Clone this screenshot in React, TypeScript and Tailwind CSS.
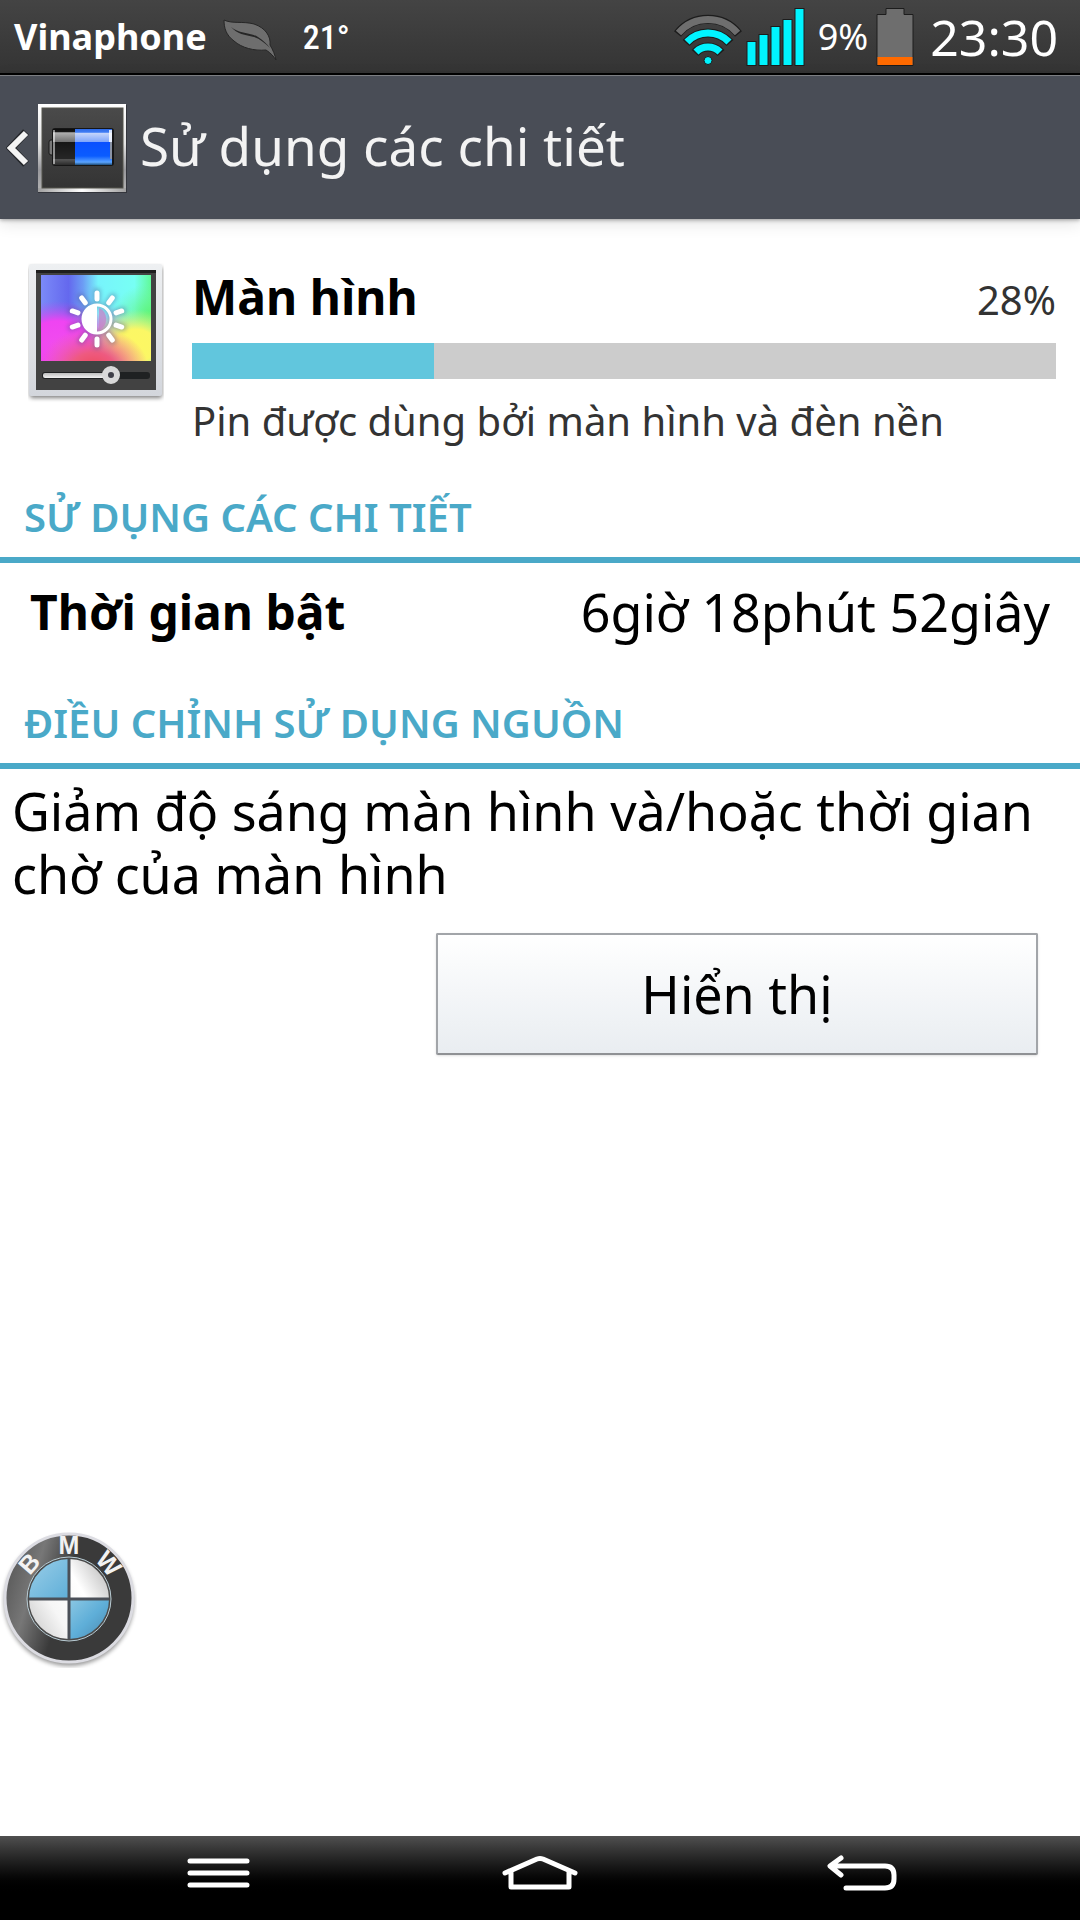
import { useState } from "react";

function LeafIcon() {
  return (
    <svg className="w-14 h-11" viewBox="0 0 56 44" aria-hidden="true">
      <path
        d="M1 1 C9 5 20 2 31 5 C43 9 48 18 47 26 C50 31 52 36 53 41 C51 38 48 34 43 31 C31 32 19 29 11 22 C3 16 1 9 1 1 Z"
        fill="#6e6e6e"
        stroke="#262626"
        strokeWidth="1"
      />
      <path
        d="M8 8 C16 15 27 13 35 18 C40 21 44 25 47 29 C42 24 37 20 31 18 C22 16 14 15 8 8 Z"
        fill="#262626"
      />
    </svg>
  );
}

function WifiIcon() {
  return (
    <svg className="w-17 h-15" viewBox="0 -7 68 60" fill="none" aria-hidden="true">
      <g stroke="#1c1c1c" strokeWidth="9">
        <path d="M3.5 20 A39 39 0 0 1 64.5 20" />
        <path d="M12 29 A29 29 0 0 1 56 29" />
        <path d="M21 39 A17 17 0 0 1 47 39" />
      </g>
      <path d="M4.5 19 A39 39 0 0 1 63.5 19" stroke="#6e6e6e" strokeWidth="7" />
      <path d="M13 28 A29 29 0 0 1 55 28" stroke="#00f4ff" strokeWidth="7" />
      <path d="M22 38 A17 17 0 0 1 46 38" stroke="#00f4ff" strokeWidth="7" />
      <circle cx="34" cy="46.5" r="4" fill="#00f4ff" stroke="#1c1c1c" strokeWidth="1" />
    </svg>
  );
}

function SignalIcon() {
  return (
    <svg className="w-15 h-15" viewBox="0 0 60 60" fill="#00f4ff" stroke="#1c1c1c" aria-hidden="true">
      <rect x="1" y="34.5" width="9" height="24" />
      <rect x="13" y="27.5" width="9" height="31" />
      <rect x="25" y="19.5" width="9" height="39" />
      <rect x="37" y="12.5" width="9" height="46" />
      <rect x="49" y="1.5" width="9" height="57" />
    </svg>
  );
}

function BatteryIcon() {
  return (
    <svg className="w-[38px] h-15" viewBox="0 0 38 60" aria-hidden="true">
      <path d="M1 7.5 H10 V1.5 H28 V7.5 H37 V58.5 H1 Z" fill="#6e6e6e" stroke="#1c1c1c" />
      <rect x="1.5" y="50" width="35" height="8" fill="#ff6a00" />
    </svg>
  );
}

function BatteryAppIcon() {
  return (
    <svg className="size-[90px]" viewBox="0 -1 90 90" aria-hidden="true">
      <defs>
        <linearGradient id="frame" x1="0" y1="0" x2="0" y2="1">
          <stop offset="0" stopColor="#ffffff" />
          <stop offset="0.45" stopColor="#e4e4e4" />
          <stop offset="0.75" stopColor="#98989c" />
          <stop offset="1" stopColor="#b4b4b4" />
        </linearGradient>
        <linearGradient id="frameEdge" x1="0" y1="0" x2="1" y2="0">
          <stop offset="0" stopColor="#a0a0a0" />
          <stop offset="0.5" stopColor="#ffffff" />
          <stop offset="1" stopColor="#a0a0a0" />
        </linearGradient>
        <linearGradient id="plate" x1="0" y1="0" x2="0" y2="1">
          <stop offset="0" stopColor="#4a4a4a" />
          <stop offset="1" stopColor="#343434" />
        </linearGradient>
        <linearGradient id="cellEmpty" x1="0" y1="0" x2="0" y2="1">
          <stop offset="0" stopColor="#0c0c0c" />
          <stop offset="0.09" stopColor="#1a1a1a" />
          <stop offset="0.1" stopColor="#b0b0b0" />
          <stop offset="0.36" stopColor="#707070" />
          <stop offset="0.37" stopColor="#161616" />
          <stop offset="0.82" stopColor="#262626" />
          <stop offset="0.85" stopColor="#555555" />
          <stop offset="1" stopColor="#2a2a2a" />
        </linearGradient>
        <linearGradient id="cellFull" x1="0" y1="0" x2="0" y2="1">
          <stop offset="0" stopColor="#2f6be6" />
          <stop offset="0.09" stopColor="#3f7cf5" />
          <stop offset="0.12" stopColor="#c3d4fb" />
          <stop offset="0.36" stopColor="#7ea5fb" />
          <stop offset="0.37" stopColor="#0a50ff" />
          <stop offset="0.75" stopColor="#0a5cff" />
          <stop offset="0.92" stopColor="#5ba4ff" />
          <stop offset="1" stopColor="#1d4c78" />
        </linearGradient>
      </defs>
      <rect x="0" y="1" width="89" height="88" fill="#000000" opacity="0.3" />
      <rect x="0" y="0" width="88" height="88" fill="url(#frame)" />
      <rect x="0" y="84" width="88" height="4" fill="url(#frameEdge)" />
      <rect x="4" y="4" width="81" height="80" fill="url(#plate)" stroke="#55554d" />
      <rect x="11" y="36" width="5" height="15" rx="2" fill="#777777" stroke="#1a1a1a" />
      <rect x="14" y="24" width="62" height="38" rx="3" fill="#161616" />
      <rect x="15" y="25" width="23" height="36" fill="url(#cellEmpty)" />
      <rect x="37" y="25" width="37" height="36" fill="url(#cellFull)" />
      <rect x="15" y="26" width="2" height="34" fill="#ffffff" opacity="0.5" />
      <rect x="71" y="26" width="3" height="12" fill="#ffffff" opacity="0.8" />
      <rect x="72" y="38" width="2" height="17" fill="#8a93a5" />
    </svg>
  );
}

function DisplayIcon() {
  const rays = [0, 36, 72, 108, 144, 180, 216, 252, 288, 324];
  return (
    <svg className="w-34 h-35 shrink-0" viewBox="0 0 136 140" aria-hidden="true">
      <defs>
        <linearGradient id="bezel" x1="0" y1="0" x2="0" y2="1">
          <stop offset="0" stopColor="#eef0f2" />
          <stop offset="1" stopColor="#d3d6dc" />
        </linearGradient>
        <linearGradient id="slider" x1="0" y1="0" x2="0" y2="1">
          <stop offset="0" stopColor="#bdbdbd" />
          <stop offset="1" stopColor="#f2f2f2" />
        </linearGradient>
        <linearGradient id="blue" x1="0" y1="0" x2="1" y2="0">
          <stop offset="0" stopColor="#7b8af8" />
          <stop offset="0.25" stopColor="#6468ee" />
          <stop offset="0.38" stopColor="#6c9cf4" />
          <stop offset="0.52" stopColor="#77f4fc" />
          <stop offset="0.85" stopColor="#77fff4" />
          <stop offset="1" stopColor="#60fa98" />
        </linearGradient>
        <radialGradient id="magenta" cx="0.15" cy="0.82" r="0.52">
          <stop offset="0" stopColor="#f14cee" />
          <stop offset="0.55" stopColor="#ef44f2" />
          <stop offset="1" stopColor="#b050f0" stopOpacity="0" />
        </radialGradient>
        <radialGradient id="yellow" cx="0.86" cy="0.82" r="0.42">
          <stop offset="0" stopColor="#fdf763" />
          <stop offset="0.45" stopColor="#fbf765" />
          <stop offset="1" stopColor="#d8f070" stopOpacity="0" />
        </radialGradient>
        <radialGradient id="green" cx="1" cy="0.45" r="0.35">
          <stop offset="0" stopColor="#5df57a" />
          <stop offset="1" stopColor="#70f5a0" stopOpacity="0" />
        </radialGradient>
        <radialGradient id="red" cx="0.48" cy="1.1" r="0.5">
          <stop offset="0" stopColor="#ee4858" />
          <stop offset="0.4" stopColor="#ee5a80" />
          <stop offset="1" stopColor="#ee60b0" stopOpacity="0" />
        </radialGradient>
        <radialGradient id="lilac" cx="0.55" cy="0.7" r="0.35">
          <stop offset="0" stopColor="#dfa0cc" />
          <stop offset="1" stopColor="#d0a0e0" stopOpacity="0" />
        </radialGradient>
        <filter id="soft" x="-20%" y="-20%" width="140%" height="140%">
          <feGaussianBlur stdDeviation="2" />
        </filter>
      </defs>
      <rect x="2" y="4" width="132" height="131" rx="2" fill="#000000" opacity="0.5" filter="url(#soft)" />
      <rect x="1" y="1" width="133" height="132" rx="2" fill="url(#bezel)" />
      <rect x="8" y="7" width="120" height="120" fill="#424242" />
      <rect x="8" y="7" width="120" height="3" fill="#1e1e1e" />
      <rect x="13" y="12" width="110" height="86" fill="url(#blue)" />
      <rect x="13" y="12" width="110" height="86" fill="url(#lilac)" />
      <rect x="13" y="12" width="110" height="86" fill="url(#magenta)" />
      <rect x="13" y="12" width="110" height="86" fill="url(#green)" />
      <rect x="13" y="12" width="110" height="86" fill="url(#yellow)" />
      <rect x="13" y="12" width="110" height="86" fill="url(#red)" />
      <g stroke="#50508a" strokeWidth="8" strokeLinecap="round" opacity="0.35" filter="url(#soft)">
        {rays.map((angle) => (
          <path key={angle} d="M69 29 V36" transform={`rotate(${angle} 69 56)`} />
        ))}
        <circle cx="69" cy="56" r="14" fill="none" strokeWidth="5" />
      </g>
      <g stroke="#ffffff" strokeWidth="5" strokeLinecap="round">
        {rays.map((angle) => (
          <path key={angle} d="M69 30 V36" transform={`rotate(${angle} 69 56)`} />
        ))}
      </g>
      <circle cx="69" cy="56" r="14" fill="none" stroke="#ffffff" strokeWidth="3" />
      <path d="M69 42 A14 14 0 0 0 69 70 Z" fill="#ffffff" />
      <path d="M71 45 A12 12 0 0 1 71 67 Z" fill="#c77fc8" opacity="0.7" />
      <rect x="14" y="109" width="108" height="7" rx="3" fill="#1f2122" />
      <rect x="15" y="110" width="62" height="5" rx="2" fill="url(#slider)" />
      <circle cx="83" cy="112" r="6" fill="#3f3f48" stroke="#d9d9d9" strokeWidth="6" />
    </svg>
  );
}

function RoundelIcon() {
  return (
    <svg className="size-34" viewBox="0 0 136 136" role="img" aria-label="BMW">
      <defs>
        <linearGradient id="ring" x1="0" y1="0.2" x2="1" y2="0.5">
          <stop offset="0" stopColor="#555555" />
          <stop offset="0.25" stopColor="#777777" />
          <stop offset="0.5" stopColor="#3a3a3a" />
          <stop offset="1" stopColor="#3a3a3a" />
        </linearGradient>
        <linearGradient id="sky" x1="0" y1="0" x2="1" y2="1">
          <stop offset="0" stopColor="#8cc8e4" />
          <stop offset="0.5" stopColor="#5eaed8" />
          <stop offset="1" stopColor="#4a86ac" />
        </linearGradient>
        <linearGradient id="skyTop" x1="0" y1="0" x2="1" y2="1">
          <stop offset="0" stopColor="#9ccfe8" />
          <stop offset="1" stopColor="#5eaed8" />
        </linearGradient>
        <linearGradient id="pearl" x1="0" y1="1" x2="1" y2="0.4">
          <stop offset="0" stopColor="#c4c4c4" />
          <stop offset="0.4" stopColor="#f6f6f6" />
          <stop offset="0.75" stopColor="#ffffff" />
          <stop offset="1" stopColor="#cfcfcf" />
        </linearGradient>
        <filter id="drop" x="-10%" y="-10%" width="120%" height="120%">
          <feGaussianBlur stdDeviation="2" />
        </filter>
      </defs>
      <circle cx="68" cy="69" r="65" fill="#000000" opacity="0.4" filter="url(#drop)" />
      <circle cx="68" cy="66" r="64" fill="url(#ring)" stroke="#dcdce2" strokeWidth="3" />
      <circle cx="68" cy="67" r="41" fill="url(#pearl)" />
      <path d="M68 67 V26 A41 41 0 0 0 27 67 Z" fill="url(#skyTop)" />
      <path d="M68 67 V108 A41 41 0 0 0 109 67 Z" fill="url(#sky)" />
      <path d="M68 26 V108 M27 67 H109" stroke="#4b5058" strokeWidth="3" />
      <circle cx="68" cy="67" r="41" fill="none" stroke="#4a4a4a" strokeWidth="2" />
      <circle cx="68" cy="67" r="42" fill="none" stroke="#b9ccd4" strokeWidth="1" />
      <g
        fill="#f2f2f2"
        fontSize="25"
        fontWeight="700"
        textAnchor="middle"
        fontFamily="Liberation Sans, Arial, sans-serif"
      >
        <text x="68" y="22">M</text>
        <text x="68" y="22" transform="rotate(-49 68 66)">B</text>
        <text x="68" y="22" transform="rotate(49 68 66)">W</text>
      </g>
    </svg>
  );
}

function StatusBar() {
  return (
    <div className="flex h-[75px] items-center justify-between border-b-2 border-black bg-linear-to-b from-[#444444] to-[#343434] pr-5.5 pl-3.5 text-white">
      <div className="flex items-center">
        <span className="text-[36px] leading-10 font-bold">Vinaphone</span>
        <span className="ml-4 pt-2">
          <LeafIcon />
        </span>
        <span className="ml-6 font-['Roboto_Condensed','Roboto',sans-serif] text-[34px] leading-10 font-medium">
          21°
        </span>
      </div>
      <div className="flex items-center">
        <WifiIcon />
        <span className="ml-1">
          <SignalIcon />
        </span>
        <span className="ml-3 text-[36px] leading-10">9%</span>
        <span className="ml-2">
          <BatteryIcon />
        </span>
        <span className="ml-4 text-[50px] leading-10">23:30</span>
      </div>
    </div>
  );
}

function Header() {
  return (
    <header className="relative flex h-36 items-center border-t border-[#7c7e82] bg-[#494d56] shadow-[0_1px_4px_rgba(0,0,0,0.35),0_4px_16px_rgba(0,0,0,0.12)]">
      <button type="button" aria-label="Quay lại" className="flex items-center pl-1.5">
        <svg className="w-6 h-10" viewBox="0 0 24 40" fill="none" aria-hidden="true">
          <path d="M20 4 L5 20 L20 36" stroke="#26282c" strokeWidth="8" />
          <path d="M20 5 L5 20 L20 35" stroke="#f4f4f4" strokeWidth="6" />
        </svg>
        <span className="ml-2">
          <BatteryAppIcon />
        </span>
      </button>
      <h1 className="ml-3 pb-1 text-[53px] text-[#f3f3f3]">Sử dụng các chi tiết</h1>
    </header>
  );
}

function SectionTitle({ children }: { children: string }) {
  return (
    <h2 className="border-b-6 border-[#4aa9c8] px-6 pb-2.5 text-[40px] leading-15 font-semibold text-[#4aa9c8]">
      {children}
    </h2>
  );
}

function NavBar() {
  return (
    <nav className="flex h-[84px] items-center justify-around bg-linear-to-b from-[#505050] to-black to-70% px-15 pb-1.5">
      <button type="button" aria-label="Menu">
        <svg className="w-20 h-10" viewBox="0 0 80 40" fill="none" aria-hidden="true">
          <path d="M10 6 H67 M10 18 H67 M10 30 H67" stroke="#ffffff" strokeWidth="5" strokeLinecap="round" />
        </svg>
      </button>
      <button type="button" aria-label="Home">
        <svg className="w-20 h-10" viewBox="0 0 80 40" fill="none" aria-hidden="true">
          <path
            d="M5 18 L37 4 Q40 3 43 4 L75 18 M11 17 V32 H69 V17"
            stroke="#ffffff"
            strokeWidth="5"
            strokeLinecap="round"
            strokeLinejoin="round"
          />
        </svg>
      </button>
      <button type="button" aria-label="Back">
        <svg className="w-20 h-10" viewBox="0 0 80 40" fill="none" aria-hidden="true">
          <path
            d="M21 3 L10 11 L21 20 M11 11 H65 Q74 11 74 20 V24 Q74 33 65 33 H26"
            stroke="#ffffff"
            strokeWidth="5"
            strokeLinecap="round"
            strokeLinejoin="round"
          />
        </svg>
      </button>
    </nav>
  );
}

function App() {
  const [percent] = useState(28);

  return (
    <div className="relative flex min-h-screen flex-col bg-white font-['Noto_Sans',sans-serif] text-black">
      <StatusBar />
      <Header />
      <main className="flex-1">
        <section className="flex items-start pt-11 pr-6 pl-7">
          <DisplayIcon />
          <div className="ml-7 flex-1">
            <div className="flex items-baseline justify-between">
              <h2 className="text-[48px] leading-17 font-bold">Màn hình</h2>
              <span className="text-[40px] leading-15 text-[#333333]">{percent}%</span>
            </div>
            <div className="mt-3 h-9 bg-[#cccccc]">
              <div className="h-full bg-[#61c6dd]" style={{ width: `${percent}%` }} />
            </div>
            <p className="mt-3 text-[40px] leading-15 text-[#333333]">
              Pin được dùng bởi màn hình và đèn nền
            </p>
          </div>
        </section>

        <section className="mt-9">
          <SectionTitle>SỬ DỤNG CÁC CHI TIẾT</SectionTitle>
          <div className="flex h-[98px] items-center justify-between px-7.5">
            <span className="text-[48px] font-bold">Thời gian bật</span>
            <span className="text-[52px]">6giờ 18phút 52giây</span>
          </div>
        </section>

        <section className="mt-8">
          <SectionTitle>ĐIỀU CHỈNH SỬ DỤNG NGUỒN</SectionTitle>
          <p className="mt-2.5 px-3 text-[52px] leading-[63px]">
            Giảm độ sáng màn hình và/hoặc thời gian chờ của màn hình
          </p>
          <div className="mt-7 flex justify-end pr-10.5">
            <button
              type="button"
              className="h-[122px] w-[58%] rounded-xs border-2 border-[#a2a5a9] border-b-[#8f9194] bg-linear-to-b from-white to-[#e9edf1] text-[52px] shadow-sm"
            >
              Hiển thị
            </button>
          </div>
        </section>
      </main>
      <button type="button" className="absolute bottom-63 left-px">
        <RoundelIcon />
      </button>
      <NavBar />
    </div>
  );
}

export default App;
